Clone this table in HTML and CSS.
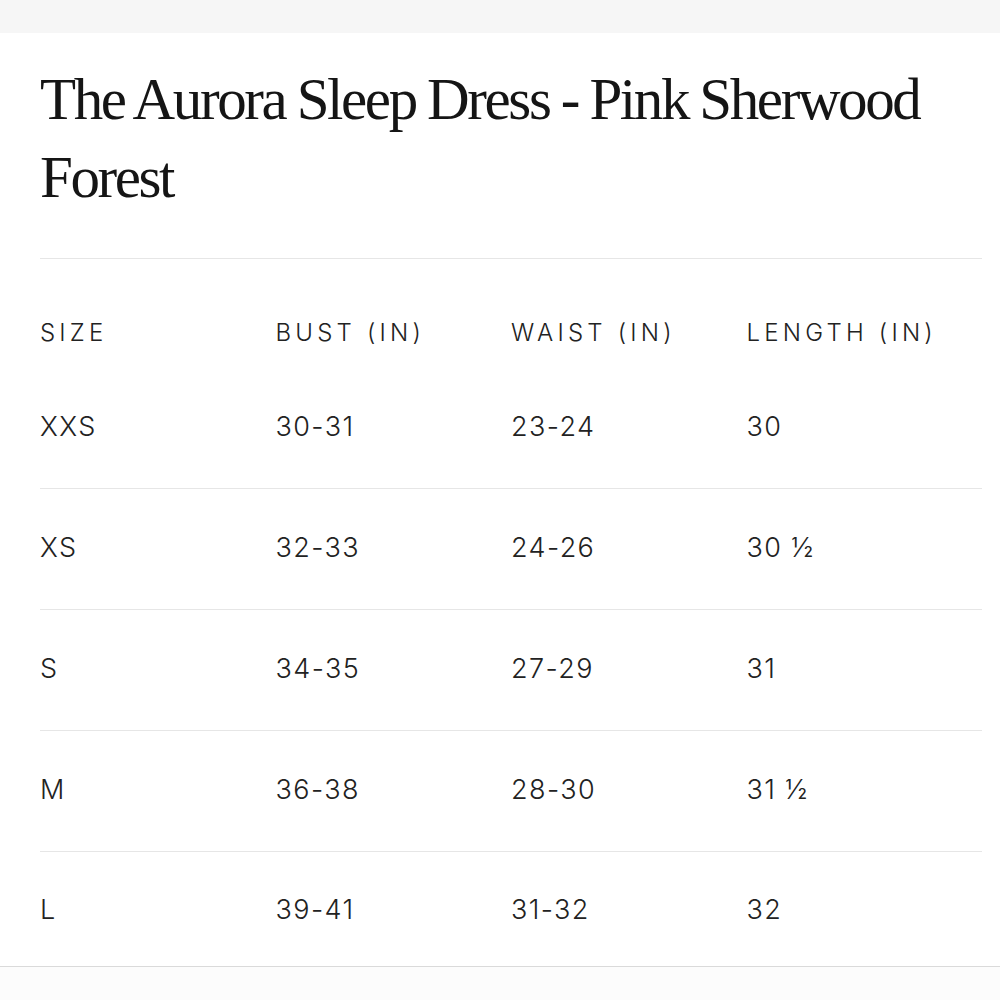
FILE: index.html
```html
<!DOCTYPE html>
<html lang="en">
<head>
<meta charset="utf-8">
<title>The Aurora Sleep Dress - Size Guide</title>
<link rel="stylesheet" href="styles.css">
</head>
<body>
<div class="topbar"></div>
<main class="product">
  <h1 class="title">The Aurora Sleep Dress - Pink Sherwood Forest</h1>
  <div class="chart">
    <div class="row head">
      <div class="cell">SIZE</div>
      <div class="cell">BUST (IN)</div>
      <div class="cell">WAIST (IN)</div>
      <div class="cell">LENGTH (IN)</div>
    </div>
    <div class="row">
      <div class="cell">XXS</div>
      <div class="cell">30-31</div>
      <div class="cell">23-24</div>
      <div class="cell">30</div>
    </div>
    <div class="row">
      <div class="cell">XS</div>
      <div class="cell">32-33</div>
      <div class="cell">24-26</div>
      <div class="cell">30 ½</div>
    </div>
    <div class="row">
      <div class="cell">S</div>
      <div class="cell">34-35</div>
      <div class="cell">27-29</div>
      <div class="cell">31</div>
    </div>
    <div class="row">
      <div class="cell">M</div>
      <div class="cell">36-38</div>
      <div class="cell">28-30</div>
      <div class="cell">31 ½</div>
    </div>
    <div class="row last">
      <div class="cell">L</div>
      <div class="cell">39-41</div>
      <div class="cell">31-32</div>
      <div class="cell">32</div>
    </div>
  </div>
</main>
<footer class="footer"></footer>
</body>
</html>
```
FILE: styles.css
```css
html, body {
  margin: 0;
  padding: 0;
  background: #ffffff;
}

body {
  font-family: Inter, "DejaVu Sans", sans-serif;
  color: #222222;
}

.topbar {
  height: 33px;
  background: #f6f6f6;
}

.product {
  padding: 0 18px 0 40px;
}

.title {
  margin: 27px 0 0 0;
  padding: 0 0 42px 0;
  font-family: "Liberation Serif", "DejaVu Serif", serif;
  font-weight: normal;
  font-size: 59px;
  line-height: 78px;
  letter-spacing: -2.4px;
  word-spacing: -1px;
  color: #151515;
  border-bottom: 1px solid #e6e6e6;
}

.chart {
  display: flex;
  flex-direction: column;
}

.row {
  display: grid;
  grid-template-columns: repeat(4, 1fr);
  height: 121px;
  box-sizing: border-box;
  align-items: center;
  border-bottom: 1px solid #e6e6e6;
  font-size: 27px;
  font-weight: 300;
  letter-spacing: 1.4px;
}

.row .cell {
  line-height: 27px;
  padding-bottom: 4px;
}

.row.head {
  height: 109px;
  border-bottom: none;
  font-size: 24px;
  letter-spacing: 4.2px;
  align-items: start;
}

.row.head .cell {
  padding-top: 60px;
}

.row.last {
  height: 114px;
  border-bottom: none;
}

.row.last .cell {
  padding-bottom: 0;
}

.footer {
  height: 34px;
  border-top: 1px solid #dadada;
  background: #fcfcfc;
}
```
